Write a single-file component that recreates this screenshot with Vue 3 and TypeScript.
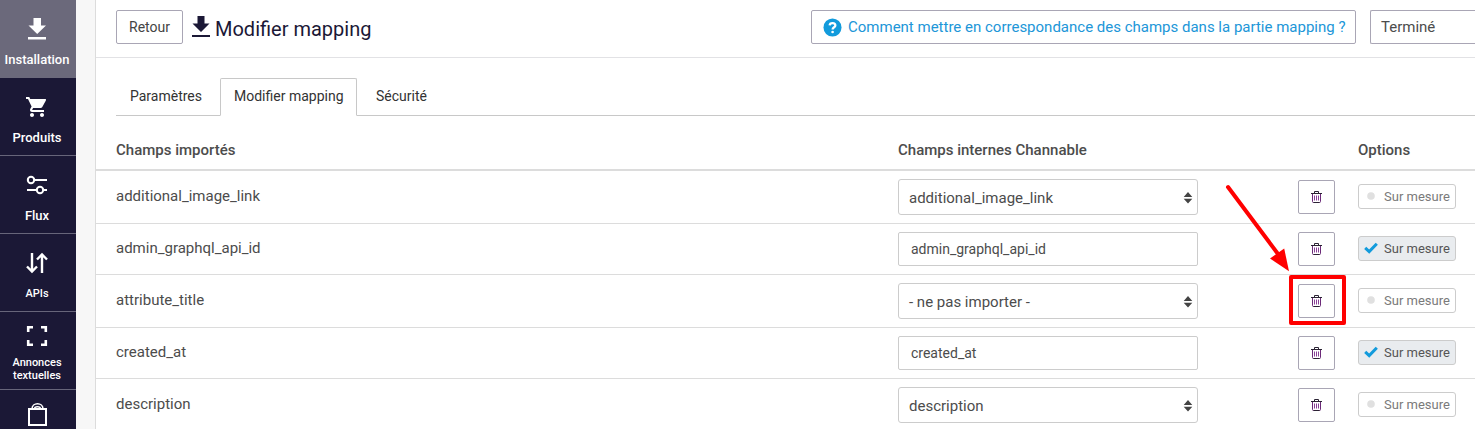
<script setup lang="ts">
interface NavItem {
  label: string
  icon: string
  size?: 'small'
}

interface MappingRow {
  source: string
  target: string
  kind: 'select' | 'input'
  custom: boolean
  highlighted?: boolean
}

const navItems: NavItem[] = [
  { label: 'Installation', icon: 'download' },
  { label: 'Produits', icon: 'cart' },
  { label: 'Flux', icon: 'sliders' },
  { label: 'APIs', icon: 'arrows', size: 'small' },
  { label: 'Annonces textuelles', icon: 'frame', size: 'small' },
  { label: '', icon: 'bag' },
]

const tabs: string[] = ['Paramètres', 'Modifier mapping', 'Sécurité']
const activeTab = 'Modifier mapping'

const rows: MappingRow[] = [
  { source: 'additional_image_link', target: 'additional_image_link', kind: 'select', custom: false },
  { source: 'admin_graphql_api_id', target: 'admin_graphql_api_id', kind: 'input', custom: true },
  { source: 'attribute_title', target: '- ne pas importer -', kind: 'select', custom: false, highlighted: true },
  { source: 'created_at', target: 'created_at', kind: 'input', custom: true },
  { source: 'description', target: 'description', kind: 'select', custom: false },
]
</script>

<template>
  <div class="page">
    <nav class="sidebar">
      <a v-for="(item, i) in navItems" :key="item.icon" class="nav-item" :class="[item.icon, item.size, { active: i === 0 }]">
        <svg v-if="item.icon === 'download'" class="nav-icon" viewBox="0 0 24 24"><path fill="#fff" d="M21 8.500h-5V1H8.500v7.500h-5L12.200 17zM3 20h18v2.500H3z" /></svg>
        <svg v-else-if="item.icon === 'cart'" class="nav-icon" viewBox="0 0 24 24"><path fill="#fff" d="M7 18c-1.1 0-1.99.9-1.99 2S5.9 22 7 22s2-.9 2-2-.9-2-2-2zM1 2v2h2l3.6 7.59-1.35 2.45c-.16.28-.25.61-.25.96 0 1.1.9 2 2 2h12v-2H7.42c-.14 0-.25-.11-.25-.25l.03-.12.9-1.63h7.45c.75 0 1.41-.41 1.75-1.03l3.58-6.49A1 1 0 0 0 20 4H5.21l-.94-2H1zm16 16c-1.1 0-1.99.9-1.99 2s.89 2 1.99 2 2-.9 2-2-.9-2-2-2z" /></svg>
        <svg v-else-if="item.icon === 'sliders'" class="nav-icon" viewBox="0 0 24 24" fill="none" stroke="#fff" stroke-width="2"><circle cx="6" cy="7" r="3.2" /><path d="M9.2 7H22M2 17h9.8M18.2 17H22" /><circle cx="15" cy="17" r="3.2" /></svg>
        <svg v-else-if="item.icon === 'arrows'" class="nav-icon" viewBox="0 0 24 24" fill="none" stroke="#fff" stroke-width="2.4"><path d="M7 2v18M2 15.5l5 5 5-5M17 22V4M12 8.500l5-5 5 5" /></svg>
        <svg v-else-if="item.icon === 'frame'" class="nav-icon" viewBox="0 0 24 24" fill="none" stroke="#fff" stroke-width="2.6"><path d="M3.200 8V3.200H8M16 3.200h4.800V8M20.800 16v4.800H16M8 20.800H3.200V16" /></svg>
        <svg v-else class="nav-icon" viewBox="0 0 24 24" fill="none" stroke="#fff" stroke-width="2"><path d="M4 7h17v16H4z" /><path d="M7 7c0-7 11-7 11 0M9.500 7c0-3 6-3 6 0" stroke-width="1.600" /></svg>
        <span class="nav-label">{{ item.label }}</span>
      </a>
    </nav>

    <main class="content">
      <header class="topbar">
        <button class="btn back">Retour</button>
        <svg class="title-icon" viewBox="0 0 18 22"><path fill="#1b1836" d="M5.500 0h7v7.500H17.500L9 16 .5 7.500h5zM0 19h18v2H0z" /></svg>
        <h1 class="title">Modifier mapping</h1>
        <a class="btn help">
          <svg class="help-icon" viewBox="0 0 20 20">
            <circle cx="10" cy="10" r="9.500" fill="#129bdc" />
            <path d="M7 7.800c.2-3.400 6-3.300 6 0 0 2-2.900 1.900-2.900 4.200" fill="none" stroke="#fff" stroke-width="2.400" />
            <circle cx="10.100" cy="14.700" r="1.400" fill="#fff" />
          </svg>
          <span>Comment mettre en correspondance des champs dans la partie mapping ?</span>
        </a>
        <button class="btn done">Terminé</button>
      </header>

      <div class="tabs">
        <a v-for="tab in tabs" :key="tab" class="tab" :class="{ current: tab === activeTab }">{{ tab }}</a>
      </div>

      <section class="table">
        <div class="row head">
          <span>Champs importés</span>
          <span>Champs internes Channable</span>
          <span></span>
          <span>Options</span>
        </div>
        <div v-for="row in rows" :key="row.source" class="row">
          <span class="source">{{ row.source }}</span>
          <div class="field" :class="row.kind">
            <span>{{ row.target }}</span>
            <svg v-if="row.kind === 'select'" class="caret" viewBox="0 0 8 12"><path fill="#444" d="M4 0l4.300 5H-.3zM-.3 6.700h8.600L4 11.500z" /></svg>
          </div>
          <div class="remove">
            <button class="trash">
              <svg viewBox="0 0 11 12" fill="none">
                <path d="M1.500 3v7.500q0 1 1 1h6q1 0 1-1V3" stroke="#6b2a78" />
                <path d="M3.500 4.500v5M5.500 4.500v5M7.500 4.500v5" stroke="#8a3f98" />
                <path d="M0 2.500h11M3.500 2.500v-2h4v2M2.500 11.500h6" stroke="#2a2233" />
              </svg>
            </button>
            <div v-if="row.highlighted" class="highlight">
              <svg class="pointer" viewBox="0 0 66 90">
                <path d="M4 4l50 67" stroke="#f00" stroke-width="4" stroke-linecap="round" />
                <path d="M65 88.300L46 75.500 60.200 65.500z" fill="#f00" />
              </svg>
            </div>
          </div>
          <button class="custom" :class="{ on: row.custom }">
            <svg v-if="row.custom" class="mark" viewBox="0 0 14 12"><path d="M1.200 5.800l4 3.800 7.600-7.900" fill="none" stroke="#129bdc" stroke-width="3" /></svg>
            <svg v-else class="mark" viewBox="0 0 14 12"><circle cx="7" cy="6" r="3.800" fill="#e0e0e0" /></svg>
            <span>Sur mesure</span>
          </button>
        </div>
      </section>
    </main>
  </div>
</template>

<style>
body {
  overflow: hidden;
}
</style>

<style scoped>
.page {
  display: flex;
  height: 429px;
  overflow: hidden;
  background: #f7f7f7;
  color: #4c4c4c;
  font-family: Roboto, "Liberation Sans", sans-serif;
}
.page * {
  box-sizing: border-box;
}
button {
  font-family: inherit;
  margin: 0;
}
.sidebar {
  flex: 0 0 76px;
  margin-right: 19px;
  background: #1b1836;
  overflow: hidden;
}
.nav-item {
  display: flex;
  flex-direction: column;
  align-items: center;
  height: 78px;
  padding: 17px 2px 0 0;
  border-bottom: 1px solid #67657a;
  color: #fff;
  font-size: 13px;
  font-weight: 500;
  line-height: 16px;
  text-align: center;
}
.nav-item.active {
  background: #6b697b;
  border-color: #6b697b;
}
.nav-icon {
  flex: none;
  width: 24px;
  height: 24px;
  margin-bottom: 11px;
}
.nav-item.small {
  font-size: 11px;
  line-height: 13px;
}
.nav-item.small .nav-icon {
  margin-bottom: 12px;
}
.nav-item.frame {
  padding-top: 12px;
}
.nav-item.frame .nav-icon {
  margin-bottom: 8px;
}
.nav-item.bag {
  padding-top: 12px;
}
.content {
  flex: 1;
  min-width: 0;
  border-left: 1px solid #dcdcdc;
  background: #fff;
}
.topbar {
  display: flex;
  align-items: flex-start;
  height: 58px;
  padding: 10px 0 0 20px;
  border-bottom: 1px solid #e2e2e5;
}
.btn {
  flex: none;
  display: flex;
  align-items: center;
  height: 34px;
  padding: 0;
  border: 1px solid #a9a6b5;
  border-radius: 2px;
  background: #fff;
  white-space: nowrap;
}
.back {
  width: 67px;
  justify-content: center;
  font-size: 14px;
  color: #444;
  padding-bottom: 1px;
}
.title-icon {
  flex: none;
  width: 18px;
  height: 22px;
  margin: 6px 5px 0 9px;
}
.title {
  margin: 5px 0 0;
  font-size: 20px;
  font-weight: 400;
  line-height: 28px;
  color: #1b1836;
}
.help {
  width: 545px;
  margin-left: auto;
  margin-right: 14px;
  padding-left: 11px;
  gap: 6px;
  font-size: 15px;
  color: #2196d8;
}
.help-icon {
  width: 19px;
  height: 19px;
}
.done {
  width: 106px;
  margin-right: -1px;
  border-right: 0;
  border-radius: 2px 0 0 2px;
  padding-left: 10px;
  font-size: 15px;
  color: #4c4c4c;
}
.tabs {
  display: flex;
  height: 38px;
  margin: 20px 0 0 20px;
  border-bottom: 1px solid #c8c8c8;
}
.tab {
  height: 38px;
  padding: 0 13px;
  border: 1px solid transparent;
  font-size: 14px;
  line-height: 35px;
  color: #333;
  white-space: nowrap;
}
.tab:first-child {
  width: 104px;
}
.tab.current {
  width: 137px;
  border-color: #c8c8c8;
  border-bottom-color: #fff;
  border-radius: 2px 2px 0 0;
  background: #fff;
}
.tab:last-child {
  padding-left: 18px;
}
.row {
  display: grid;
  grid-template-columns: 782px 400px 60px 1fr;
  align-items: center;
  padding: 8px 0 8px 20px;
  border-bottom: 1px solid #dcdcdc;
  font-size: 15px;
}
.row.head {
  height: 55px;
  padding: 15px 0 0 20px;
  border-bottom-width: 2px;
  font-weight: 500;
}
.source {
  line-height: 20px;
  margin-top: -3px;
}
.field {
  display: flex;
  align-items: center;
  justify-content: space-between;
  width: 300px;
  border: 1px solid #ccc;
  border-radius: 2px;
}
.select {
  height: 36px;
  padding: 1px 5px 0 10px;
  border-radius: 3px;
}
.input {
  height: 34px;
  padding-left: 12px;
  font-size: 14px;
}
.caret {
  width: 8px;
  height: 12px;
  overflow: visible;
}
.remove {
  position: relative;
}
.trash {
  display: flex;
  align-items: center;
  justify-content: center;
  width: 37px;
  height: 34px;
  padding: 0;
  border: 1px solid #a9a6b5;
  border-radius: 2px;
  background: #fff;
}
.trash svg {
  width: 11px;
  height: 12px;
}
.highlight {
  position: absolute;
  left: -9px;
  top: -9px;
  width: 57px;
  height: 50px;
  border: 4px solid #f00;
  border-radius: 2px;
}
.pointer {
  position: absolute;
  left: -69px;
  top: -96px;
  width: 66px;
  height: 90px;
}
.custom {
  display: flex;
  align-items: center;
  width: 98px;
  height: 25px;
  margin-bottom: 2px;
  padding: 0 0 0 5px;
  gap: 6px;
  border: 1px solid #ccc;
  border-radius: 3px;
  background: #fff;
  color: #7a7a7a;
  font-size: 13px;
  white-space: nowrap;
}
.custom.on {
  background: #e9ecef;
  color: #555;
}
.mark {
  flex: none;
  width: 14px;
  height: 12px;
}
</style>
